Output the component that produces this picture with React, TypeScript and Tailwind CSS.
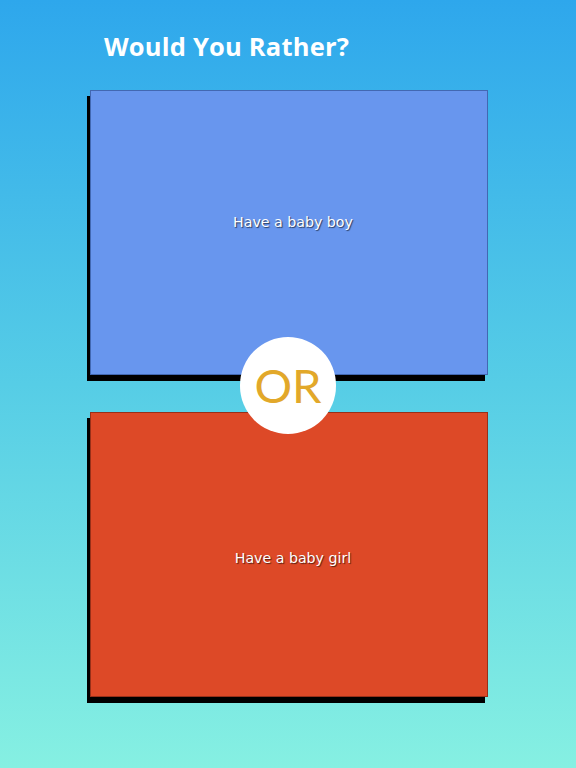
import React from "react";

export default function App() {
  return (
    <div
      className="w-[576px] h-[768px] overflow-hidden bg-[linear-gradient(to_bottom,#2ea7ec_0%,#56cde6_50%,#86f0e2_100%)]"
      style={{ fontFamily: '"DejaVu Sans", sans-serif' }}
    >
      <div className="pt-[30px] pl-[104px] h-[90px]">
        <h1
          className="text-white text-[25.5px] font-bold leading-[32px] tracking-[0.2px]"
          style={{ fontFamily: '"Open Sans", sans-serif' }}
        >
          Would You Rather?
        </h1>
      </div>
      <div className="relative ml-[90px] w-[398px] flex flex-col gap-[37px]">
        <div className="h-[285px] bg-[#6896ee] border border-[#2a4a8a]/60 shadow-[-3px_6px_0_#000] flex items-center justify-center pb-[20px] pl-[8px]">
          <span className="text-white text-[14.2px] [text-shadow:1px_1px_1px_rgba(0,0,0,0.6)]">
            Have a baby boy
          </span>
        </div>
        <div className="h-[285px] bg-[#dd4927] border border-[#6a2010]/60 shadow-[-3px_6px_0_#000] flex items-center justify-center pt-[8px] pl-[8px]">
          <span className="text-white text-[14.2px] [text-shadow:1px_1px_1px_rgba(0,0,0,0.6)]">
            Have a baby girl
          </span>
        </div>
        <div className="absolute left-[150px] top-[247px] w-[96px] h-[97px] rounded-full bg-white flex items-center justify-center">
          <span
            className="text-[#e2a82a] text-[47px] leading-none"
            style={{ fontFamily: '"Lato", sans-serif', fontWeight: 400 }}
          >
            OR
          </span>
        </div>
      </div>
    </div>
  );
}
